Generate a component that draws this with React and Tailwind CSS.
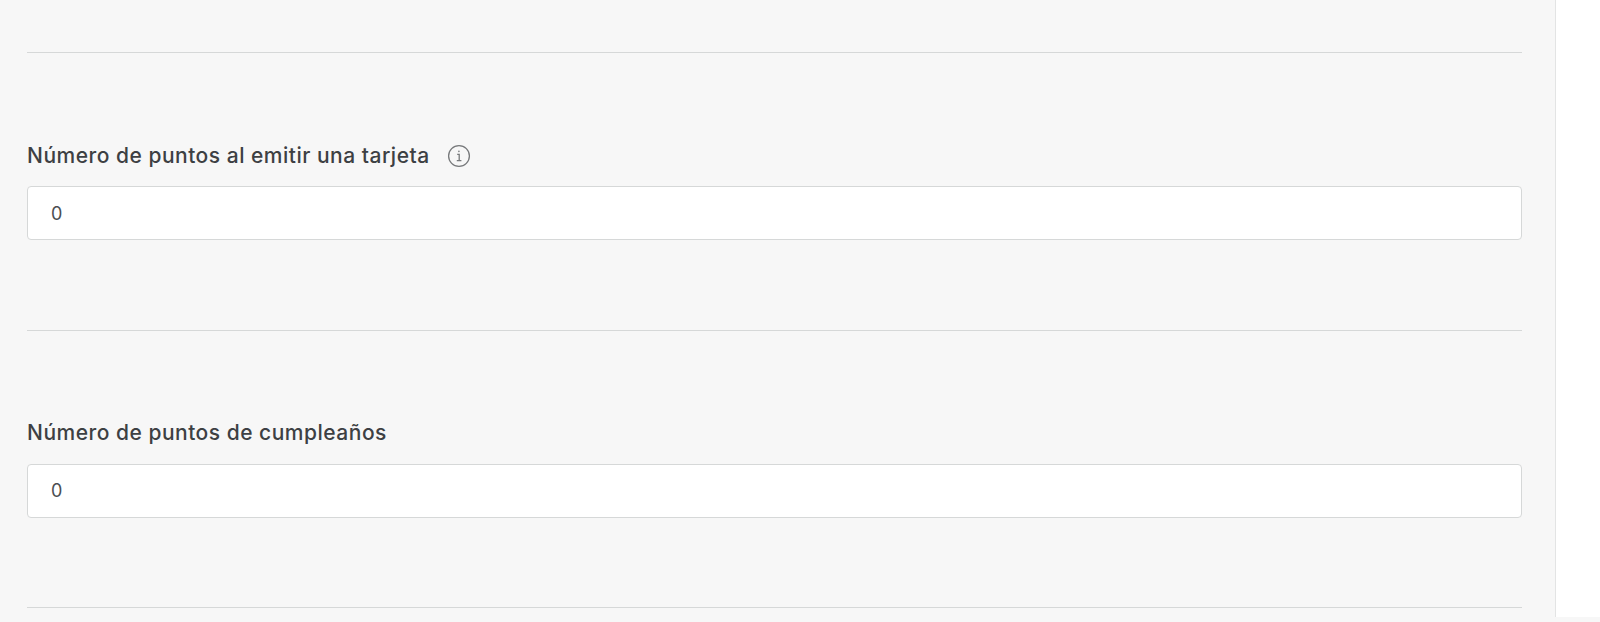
import React from 'react';

const InfoIcon = () => (
  <svg width="24" height="24" viewBox="0 0 24 24" fill="none" stroke="#77797b" strokeWidth="1.3" className="ml-[17px]">
    <circle cx="12" cy="12" r="10.4" />
    <path d="M10.2 10.4h2v6M9.8 16.6h4.6" />
    <circle cx="11.9" cy="7.4" r="0.8" fill="#77797b" stroke="none" />
  </svg>
);

const PointsField = ({ label, info, value }) => (
  <div className="flex flex-col border-b border-[#d6d8d8] pb-[89.5px]">
    <div className="flex h-[25px] items-center">
      <span className="text-[21px] font-medium tracking-[0.5px] text-[#3d4043]">{label}</span>
      {info && <InfoIcon />}
    </div>
    <div className="mt-[18px] flex h-[54px] items-center rounded-[4px] border border-[#d6d8d8] bg-white px-[23px] text-[18px] text-[#4b4e51]">
      {value}
    </div>
  </div>
);

export default function App() {
  return (
    <div className="flex h-[622px] w-[1600px] overflow-hidden bg-[#f7f7f7] font-['Inter','Noto_Sans',sans-serif]">
      <main className="flex w-[1555px] flex-col gap-[90px] pl-[27px] pr-[33px]">
        <div className="h-[53px] shrink-0 border-b border-[#d6d8d8]" />
        <PointsField label="Número de puntos al emitir una tarjeta" info value="0" />
        <PointsField label="Número de puntos de cumpleaños" value="0" />
      </main>
      <aside className="h-[617px] w-[45px] border-l border-[#e3e4e4] bg-white" />
    </div>
  );
}
